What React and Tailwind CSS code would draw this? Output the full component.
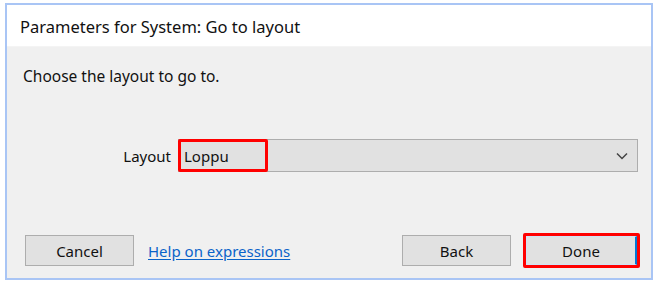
const App = () => {
  return (
    <div className="w-[656px] h-[284px] bg-white pt-[3px] pl-[5px] font-['Noto_Sans','Open_Sans',sans-serif] text-[15px] text-[#111]">
      <div className="w-[648px] h-[277px] border-2 border-[#a9c5f5] flex flex-col">
        {/* title */}
        <div className="h-[42px] bg-white flex items-center pl-[13px] pt-[2px] border-b border-[#f4f4f4]">
          <span className="text-[16.5px] leading-5">Parameters for System: Go to layout</span>
        </div>

        <div className="flex-1 bg-[#f0f0f0] flex flex-col pl-[16px] pr-[11px]">
          <p className="mt-[19px] leading-5 text-[15.5px]">Choose the layout to go to.</p>

          {/* layout row */}
          <div className="mt-[53px] flex items-center">
            <span className="w-[155px] text-right pr-[7px] leading-5">Layout</span>
            <div className="relative w-[460px] h-[33px] bg-[#e1e1e1] border border-[#adadad] flex items-center justify-between pl-[5px] pr-[9px]">
              <span className="leading-5">Loppu</span>
              <svg width="12" height="8" viewBox="0 0 12 8" fill="none" stroke="#444" strokeWidth="1.5">
                <path d="M1 1.5l5 5 5-5" />
              </svg>
              <div className="absolute -left-px -top-px w-[90px] h-[33px] border-[3px] border-[#f00] rounded-[2px]" />
            </div>
          </div>

          {/* buttons */}
          <div className="mt-[61px] flex items-center">
            <button className="w-[109px] h-[31px] bg-[#e1e1e1] border border-[#adadad] leading-5 ml-[2px]">
              Cancel
            </button>
            <a href="#" className="ml-[14px] text-[#0a63c9] underline underline-offset-2 leading-5">
              Help on expressions
            </a>
            <button className="ml-auto w-[109px] h-[31px] bg-[#e1e1e1] border border-[#adadad] leading-5">
              Back
            </button>
            <div className="ml-[12px] w-[117px] h-[35px] border-[3px] border-[#f00] rounded-[2px] flex">
              <button className="flex-1 bg-[#e1e1e1] border-y border-l border-[#cfe3f7] border-r-2 border-r-[#0078d7] leading-5">
                Done
              </button>
            </div>
          </div>
        </div>
      </div>
    </div>
  );
};

export default App;
